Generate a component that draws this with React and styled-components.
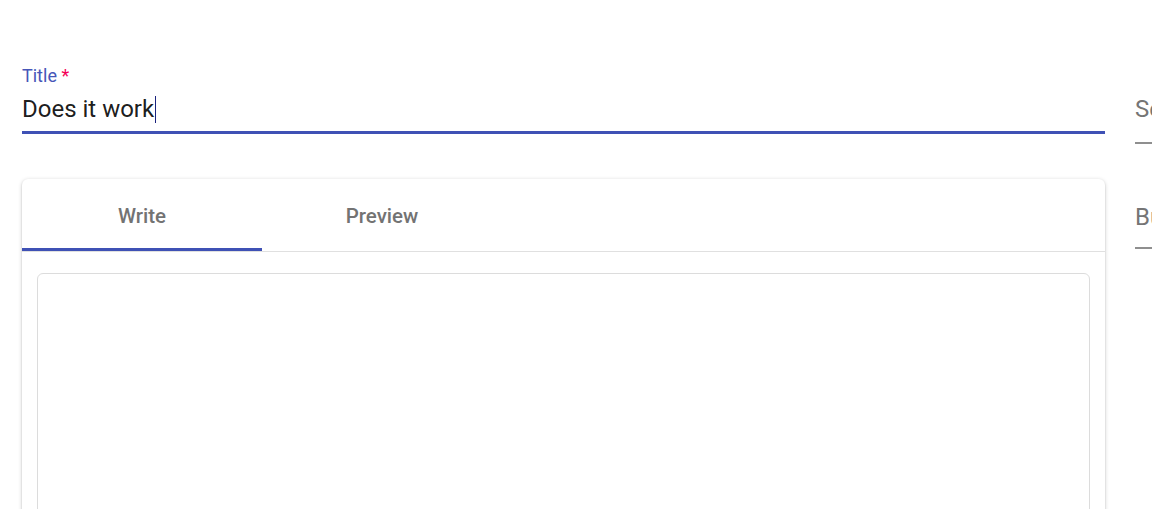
import React from 'react';
import styled, { createGlobalStyle } from 'styled-components';

const GlobalStyle = createGlobalStyle`
  html, body {
    margin: 0;
    padding: 0;
    background: #fff;
    overflow: hidden;
  }
  body {
    font-family: Roboto, "Liberation Sans", Arial, sans-serif;
  }
`;

const Page = styled.main`
  display: grid;
  grid-template-columns: 1083px 420px;
  column-gap: 30px;
  padding: 67px 0 0 22px;
  width: max-content;
`;

const MainColumn = styled.section`
  display: flex;
  flex-direction: column;
  gap: 45px;
`;

const SideColumn = styled.aside`
  display: flex;
  flex-direction: column;
  gap: 55px;
  padding-top: 24px;
`;

const Field = styled.div`
  display: flex;
  flex-direction: column;
`;

const Label = styled.label`
  font-size: 18px;
  line-height: 18px;
  color: #4656b8;
`;

const Required = styled.span`
  color: #f50057;
`;

const InputRow = styled.div`
  margin-top: 6px;
  height: 36px;
  padding-bottom: 4px;
  border-bottom: 3px solid #3f51b5;
  font-size: 24px;
  line-height: 36px;
  color: rgba(0, 0, 0, 0.9);
  display: flex;
  align-items: center;
`;

const Caret = styled.span`
  display: inline-block;
  width: 1px;
  height: 27px;
  margin-left: 1px;
  background: #1a237e;
`;

const SideField = styled.div`
  height: 36px;
  padding-bottom: ${(p) => p.$pad}px;
  border-bottom: 2px solid #8f8f8f;
  font-size: 24px;
  line-height: 36px;
  color: #757575;
  white-space: nowrap;
`;

const Card = styled.div`
  background: #fff;
  border-radius: 6px;
  box-shadow: 0 1.5px 4.5px rgba(0, 0, 0, 0.2), 0 1.5px 1.5px rgba(0, 0, 0, 0.14),
    0 3px 1.5px -1.5px rgba(0, 0, 0, 0.12);
  height: 420px;
  display: flex;
  flex-direction: column;
`;

const TabBar = styled.div`
  display: flex;
  border-bottom: 1px solid #e0e0e0;
`;

const Tab = styled.button`
  width: 240px;
  height: 72px;
  padding: 5px 0 0;
  border: none;
  border-bottom: 3px solid ${(p) => (p.$active ? '#3f51b5' : 'transparent')};
  background: none;
  font-family: Roboto, "Liberation Sans", Arial, sans-serif;
  font-weight: 500;
  font-size: 20.5px;
  color: #737373;
  cursor: pointer;
`;

const CardBody = styled.div`
  flex: 1;
  padding: 21px 15px 0;
  display: flex;
`;

const Editor = styled.div`
  flex: 1;
  border: 1px solid #dcdcdc;
  border-radius: 6px;
`;

export default function App() {
  return (
    <>
      <GlobalStyle />
      <Page>
        <MainColumn>
          <Field>
            <Label>
              Title <Required>*</Required>
            </Label>
            <InputRow>
              Does it work
              <Caret />
            </InputRow>
          </Field>
          <Card>
            <TabBar>
              <Tab $active>Write</Tab>
              <Tab>Preview</Tab>
            </TabBar>
            <CardBody>
              <Editor />
            </CardBody>
          </Card>
        </MainColumn>
        <SideColumn>
          <SideField $pad={15}>Section</SideField>
          <SideField $pad={12}>Build</SideField>
        </SideColumn>
      </Page>
    </>
  );
}
